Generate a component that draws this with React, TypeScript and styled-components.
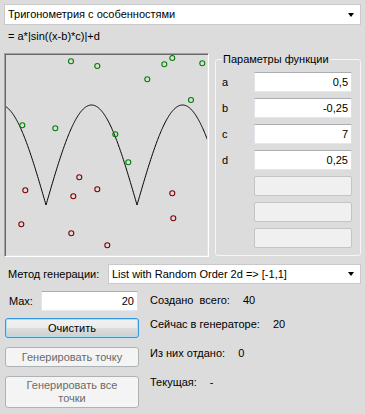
import React from 'react';
import styled, { createGlobalStyle, css } from 'styled-components';

const GlobalStyle = createGlobalStyle`
  html, body { margin: 0; padding: 0; background: #dcdcdc; }
  body { font-family: "Liberation Sans", Arial, sans-serif; font-size: 11px; color: #000; }
  * { box-sizing: border-box; }
`;

const Window = styled.div`
  width: 365px;
  height: 414px;
  padding: 4px 4px 0 4px;
  display: flex;
  flex-direction: column;
  overflow: hidden;
  background: #dcdcdc;
`;

const Combo = styled.div<{ $h: number }>`
  flex: 1;
  height: ${(p) => p.$h}px;
  background: #fff;
  border: 1px solid #c9c9c9;
  display: flex;
  align-items: center;
  padding-left: 3px;
  white-space: nowrap;
`;

const ComboText = styled.span`
  flex: 1;
  line-height: 13px;
`;

const ArrowBox = styled.span`
  width: 18px;
  display: flex;
  justify-content: center;
  align-items: center;
  &::after {
    content: '';
    width: 0;
    height: 0;
    border-left: 3.5px solid transparent;
    border-right: 3.5px solid transparent;
    border-top: 4px solid #000;
  }
`;

const TopRow = styled.div`
  display: flex;
`;

const Formula = styled.div`
  margin-top: 4px;
  padding-left: 4px;
  line-height: 14px;
  height: 14px;
`;

const MiddleRow = styled.div`
  display: flex;
  align-items: flex-start;
  gap: 6px;
  margin-top: 10px;
  height: 204px;
`;

const Plot = styled.div`
  width: 205px;
  height: 204px;
  border-top: 1px solid #a0a0a0;
  border-left: 1px solid #a0a0a0;
  border-right: 1px solid #ffffff;
  border-bottom: 1px solid #ffffff;
  box-shadow: inset 1px 1px 0 #696969, inset -1px -1px 0 #e3e3e3;
  background: #dcdcdc;
  padding: 1px;
`;

const PlotSvg = styled.svg`
  display: block;
  width: 201px;
  height: 200px;
`;

const Group = styled.fieldset`
  width: 146px;
  height: 203px;
  margin: 0;
  padding: 0 6px;
  border: 1px solid #f6f6f6;
  border-radius: 3px;
  min-inline-size: 0;
`;

const Legend = styled.legend`
  padding: 0 1px;
  line-height: 13px;
  height: 13px;
`;

const ParamGrid = styled.div`
  display: grid;
  grid-template-columns: 32px 98px;
  grid-auto-rows: 20px;
  row-gap: 6px;
  padding-top: 6px;
`;

const ParamLabel = styled.div`
  display: flex;
  align-items: center;
  line-height: 13px;
`;

const TextBox = styled.div<{ $disabled?: boolean; $w?: number }>`
  height: 20px;
  width: ${(p) => (p.$w ? `${p.$w}px` : 'auto')};
  display: flex;
  align-items: center;
  justify-content: flex-end;
  padding-right: 3px;
  line-height: 13px;
  ${(p) =>
    p.$disabled
      ? css`
          background: #f0f0f0;
          border: 1px solid #c4c4c4;
          border-radius: 2px;
        `
      : css`
          background: #fff;
          border-top: 1px solid #abadb3;
          border-left: 1px solid #e2e3ea;
          border-right: 1px solid #dbdfe6;
          border-bottom: 1px solid #e3e9ef;
        `}
`;

const GenRow = styled.div`
  display: flex;
  align-items: center;
  margin-top: 7px;
`;

const GenLabel = styled.div`
  width: 104px;
  padding-left: 4px;
  line-height: 13px;
`;

const Bottom = styled.div`
  display: grid;
  grid-template-columns: 134px 1fr;
  grid-template-rows: 27px 29px 29px 32px;
  column-gap: 11px;
  margin-top: 7px;
  padding-left: 1px;
`;

const MaxCell = styled.div`
  display: flex;
  align-items: flex-start;
`;

const MaxLabel = styled.div`
  width: 36px;
  padding-left: 4px;
  height: 20px;
  display: flex;
  align-items: center;
`;

const Button = styled.button<{ $variant: 'default' | 'disabled'; $h: number }>`
  width: 134px;
  height: ${(p) => p.$h}px;
  margin: 0;
  padding: 0 10px;
  font-family: inherit;
  font-size: 11px;
  line-height: 13px;
  border-radius: 3px;
  text-align: center;
  ${(p) =>
    p.$variant === 'default'
      ? css`
          color: #000;
          border: 1px solid #3399e0;
          box-shadow: inset 0 0 0 1px #a9e1fb;
          background: linear-gradient(#f2f2f2 0%, #ebebeb 48%, #dddddd 52%, #cfcfcf 100%);
        `
      : css`
          color: #6a6a6a;
          border: 1px solid #adb2b5;
          background: #f4f4f4;
        `}
`;

const Stat = styled.div<{ $top: number }>`
  display: flex;
  gap: 13px;
  padding-top: ${(p) => p.$top}px;
  line-height: 13px;
  white-space: pre;
`;

const greenPts: [number, number][] = [
  [71, 61.3], [97.3, 66], [164.3, 64.3], [172.3, 58], [202.3, 63.3], [147.3, 79.3],
  [191, 100], [22.3, 125.3], [55.3, 128.3], [115.3, 134.3], [128.3, 162.3],
];
const redPts: [number, number][] = [
  [79.3, 177.3], [25.3, 190.3], [97.3, 189.3], [73.3, 196.3], [172.3, 193.3],
  [21.3, 224.3], [71.3, 233.3], [173.3, 218.3], [107.3, 245.3],
];

function cuspAwarePath(): string {
  const a = 0.5, b = -0.25, c = 7, d = 0.25;
  const xs: number[] = [];
  for (let i = 0; i <= 400; i++) xs.push(i / 400);
  for (let k = 0; k < 4; k++) {
    const xc = (k * Math.PI) / c + b;
    if (xc > 0 && xc < 1) xs.push(xc);
  }
  xs.sort((p, q) => p - q);
  return xs
    .map((x, i) => {
      const y = a * Math.abs(Math.sin((x - b) * c)) + d;
      return `${i === 0 ? 'M' : 'L'}${(-0.3 + 202.8 * x).toFixed(2)},${(200 - 200 * y).toFixed(2)}`;
    })
    .join(' ');
}

const PlotArea: React.FC = () => (
  <Plot>
    <PlotSvg viewBox="0 0 201 200">
      <path d={cuspAwarePath()} fill="none" stroke="#000" strokeWidth={1} />
      {greenPts.map(([x, y], i) => (
        <circle key={`g${i}`} cx={x - 6} cy={y - 55} r={2.5} fill="none" stroke="#008000" strokeWidth={1.1} />
      ))}
      {redPts.map(([x, y], i) => (
        <circle key={`r${i}`} cx={x - 6} cy={y - 55} r={2.5} fill="none" stroke="#800000" strokeWidth={1.1} />
      ))}
    </PlotSvg>
  </Plot>
);

const params = [
  { name: 'a', value: '0,5' },
  { name: 'b', value: '-0,25' },
  { name: 'c', value: '7' },
  { name: 'd', value: '0,25' },
];

export default function App() {
  return (
    <>
      <GlobalStyle />
      <Window>
        <TopRow>
          <Combo $h={21}>
            <ComboText>Тригонометрия с особенностями</ComboText>
            <ArrowBox />
          </Combo>
        </TopRow>
        <Formula>= a*|sin((x-b)*c)|+d</Formula>
        <MiddleRow>
          <PlotArea />
          <Group>
            <Legend>Параметры функции</Legend>
            <ParamGrid>
              {params.map((p) => (
                <React.Fragment key={p.name}>
                  <ParamLabel>{p.name}</ParamLabel>
                  <TextBox>{p.value}</TextBox>
                </React.Fragment>
              ))}
              {[0, 1, 2].map((i) => (
                <React.Fragment key={`e${i}`}>
                  <ParamLabel />
                  <TextBox $disabled />
                </React.Fragment>
              ))}
            </ParamGrid>
          </Group>
        </MiddleRow>
        <GenRow>
          <GenLabel>Метод генерации:</GenLabel>
          <Combo $h={20}>
            <ComboText>List with Random Order 2d =&gt; [-1,1]</ComboText>
            <ArrowBox />
          </Combo>
        </GenRow>
        <Bottom>
          <MaxCell>
            <MaxLabel>Max:</MaxLabel>
            <TextBox $w={97}>20</TextBox>
          </MaxCell>
          <Stat $top={3}>
            <span>Создано  всего:</span>
            <span>40</span>
          </Stat>
          <div>
            <Button $variant="default" $h={20}>Очистить</Button>
          </div>
          <Stat $top={0}>
            <span>Сейчас в генераторе:</span>
            <span>20</span>
          </Stat>
          <div>
            <Button $variant="disabled" $h={20} disabled>Генерировать точку</Button>
          </div>
          <Stat $top={0}>
            <span>Из них отдано:</span>
            <span>0</span>
          </Stat>
          <div>
            <Button $variant="disabled" $h={32} disabled>Генерировать все точки</Button>
          </div>
          <Stat $top={0}>
            <span>Текущая:</span>
            <span>-</span>
          </Stat>
        </Bottom>
      </Window>
    </>
  );
}
